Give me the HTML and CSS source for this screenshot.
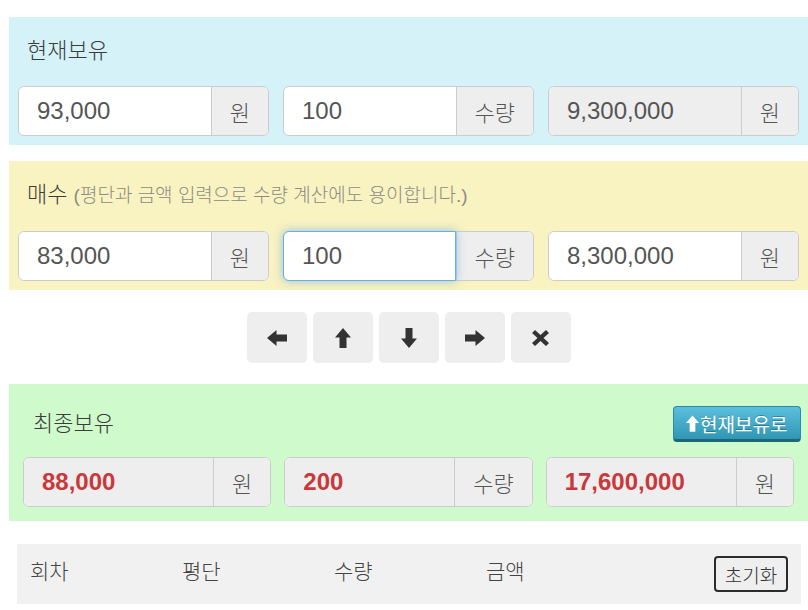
FILE: index.html
```html
<!DOCTYPE html>
<html lang="ko">
<head>
    <meta charset="UTF-8">
    <meta name="viewport" content="width=device-width, initial-scale=1.0">
    <title>물타기 계산기</title>
    <link rel="stylesheet" href="styles.css">
</head>
<body>

<div class="panel now">
    <div class="panel-title">현재보유</div>
    <div class="row">
        <div class="input-group">
            <input class="form-control" type="text" value="93,000">
            <span class="addon">원</span>
        </div>
        <div class="input-group">
            <input class="form-control" type="text" value="100">
            <span class="addon">수량</span>
        </div>
        <div class="input-group">
            <input class="form-control" type="text" value="9,300,000" readonly>
            <span class="addon">원</span>
        </div>
    </div>
</div>

<div class="panel buy">
    <div class="panel-title">매수 <small>(평단과 금액 입력으로 수량 계산에도 용이합니다.)</small></div>
    <div class="row">
        <div class="input-group">
            <input class="form-control" type="text" value="83,000">
            <span class="addon">원</span>
        </div>
        <div class="input-group">
            <input class="form-control focus" type="text" value="100">
            <span class="addon">수량</span>
        </div>
        <div class="input-group">
            <input class="form-control" type="text" value="8,300,000">
            <span class="addon">원</span>
        </div>
    </div>
</div>

<div class="moves">
    <button class="move" title="왼쪽">
        <svg width="20" height="16" viewBox="0 0 20 16"><path d="M0 8 L9.5 0 L9.5 4.5 L20 4.5 L20 11.5 L9.5 11.5 L9.5 16 Z"/></svg>
    </button>
    <button class="move" title="위">
        <svg width="16" height="20" viewBox="0 0 16 20"><path d="M8 0 L16 9.5 L11.5 9.5 L11.5 20 L4.5 20 L4.5 9.5 L0 9.5 Z"/></svg>
    </button>
    <button class="move" title="아래">
        <svg width="16" height="20" viewBox="0 0 16 20"><path d="M8 20 L16 10.5 L11.5 10.5 L11.5 0 L4.5 0 L4.5 10.5 L0 10.5 Z"/></svg>
    </button>
    <button class="move" title="오른쪽">
        <svg width="20" height="16" viewBox="0 0 20 16"><path d="M20 8 L10.5 0 L10.5 4.5 L0 4.5 L0 11.5 L10.5 11.5 L10.5 16 Z"/></svg>
    </button>
    <button class="move" title="삭제">
        <svg width="17" height="16" viewBox="0 0 17 16"><path d="M3 0 L8.5 5 L14 0 L17 3 L11.5 8 L17 13 L14 16 L8.5 11 L3 16 L0 13 L5.5 8 L0 3 Z"/></svg>
    </button>
</div>

<div class="panel result">
    <div class="result-head">
        <div class="panel-title">최종보유</div>
        <button class="btn-info">
            <svg width="13" height="17" viewBox="0 0 16 20"><path d="M8 0 L16 9.5 L11.5 9.5 L11.5 20 L4.5 20 L4.5 9.5 L0 9.5 Z"/></svg>현재보유로
        </button>
    </div>
    <div class="row">
        <div class="input-group">
            <input class="form-control total" type="text" value="88,000" readonly>
            <span class="addon">원</span>
        </div>
        <div class="input-group">
            <input class="form-control total" type="text" value="200" readonly>
            <span class="addon">수량</span>
        </div>
        <div class="input-group">
            <input class="form-control total" type="text" value="17,600,000" readonly>
            <span class="addon">원</span>
        </div>
    </div>
</div>

<table class="history">
    <thead>
        <tr>
            <th>회차</th>
            <th>평단</th>
            <th>수량</th>
            <th>금액</th>
            <th class="reset-cell"><button class="reset">초기화</button></th>
        </tr>
    </thead>
    <tbody id="historyRows"></tbody>
</table>

</body>
</html>
```

FILE: styles.css
```css
body {
    font-family: 'Liberation Sans', 'Noto Sans CJK KR', Arial, sans-serif;
    margin: 0;
    padding: 0;
    color: #333;
    background: #fff;
}
.panel {
    margin-left: 9px;
    width: 799px;
    box-sizing: border-box;
    padding: 20px 9px 9px 9px;
}
.now {
    margin-top: 17px;
    background-color: #d4f2f8;
}
.buy {
    margin-top: 16px;
    background-color: #f9f2c1;
}
.result {
    background-color: #cffacb;
    padding: 22px 14px 14px 14px;
}
.panel-title {
    font-size: 22px;
    font-weight: 300;
    line-height: 28px;
    padding-left: 9px;
    margin-bottom: 21px;
    color: #3c3c3c;
}
.panel-title small {
    font-size: 19px;
    color: #8c8c84;
}
.row {
    display: flex;
    gap: 14px;
}
.result .row {
    gap: 13px;
}
.input-group {
    flex: 1;
    min-width: 0;
    display: flex;
    height: 50px;
    border: 1px solid #ccc;
    border-radius: 6px;
    box-sizing: border-box;
    background: #fff;
}
.form-control {
    flex: 1;
    width: 0;
    min-width: 0;
    border: none;
    border-radius: 6px 0 0 6px;
    padding: 0 18px;
    font-family: inherit;
    font-size: 24px;
    color: #555;
    background: #fff;
    outline: none;
}
.form-control[readonly] {
    background-color: #eee;
}
.form-control.focus {
    margin: -1px 0 -1px -1px;
    border: 1px solid #66afe9;
    box-shadow: 0 0 10px rgba(102, 175, 233, 0.7);
    position: relative;
}
.form-control.total {
    color: #c9383a;
    font-weight: bold;
}
.addon {
    display: flex;
    align-items: center;
    padding: 0 18px;
    font-size: 22px;
    font-weight: 300;
    color: #555;
    background-color: #eee;
    border-left: 1px solid #ccc;
    border-radius: 0 6px 6px 0;
}
.moves {
    display: flex;
    justify-content: center;
    gap: 6px;
    margin: 22px 0 21px 9px;
    width: 799px;
}
.move {
    width: 60px;
    height: 51px;
    border: none;
    border-radius: 5px;
    background-color: #eee;
    display: flex;
    align-items: center;
    justify-content: center;
    cursor: pointer;
}
.move svg {
    fill: #333;
}
.result-head {
    display: flex;
    align-items: center;
    justify-content: space-between;
    height: 36px;
    margin-bottom: 15px;
}
.result-head .panel-title {
    margin-bottom: 0;
    padding-left: 10px;
}
.btn-info {
    margin-right: -7px;
    width: 128px;
    height: 36px;
    padding: 0 0 0 12px;
    display: flex;
    align-items: center;
    gap: 1px;
    font-family: inherit;
    font-size: 19px;
    color: #fff;
    background: linear-gradient(#5bc0de, #2f96b4);
    border: 1px solid #2a8aa6;
    border-bottom: 3px solid #1d6679;
    border-radius: 4px;
    text-shadow: 0 -1px 0 rgba(0, 0, 0, 0.25);
    cursor: pointer;
}
.btn-info svg {
    fill: #fff;
}
.history {
    margin: 23px 0 0 17px;
    width: 784px;
    border-collapse: collapse;
    background-color: #f1f1f1;
}
.history th {
    text-align: left;
    font-weight: 300;
    font-size: 21px;
    line-height: 28px;
    color: #444;
    vertical-align: top;
    padding: 14px 0 12px 13px;
    width: 139px;
}
.history th.reset-cell {
    text-align: right;
    padding: 12px 13px 12px 0;
    width: auto;
}
.reset {
    display: inline-block;
    vertical-align: top;
    width: 74px;
    height: 36px;
    font-family: inherit;
    font-size: 19px;
    font-weight: 300;
    color: #333;
    background-color: #efefef;
    border: 2px solid #2b2b2b;
    border-radius: 4px;
    padding: 0;
}
```
